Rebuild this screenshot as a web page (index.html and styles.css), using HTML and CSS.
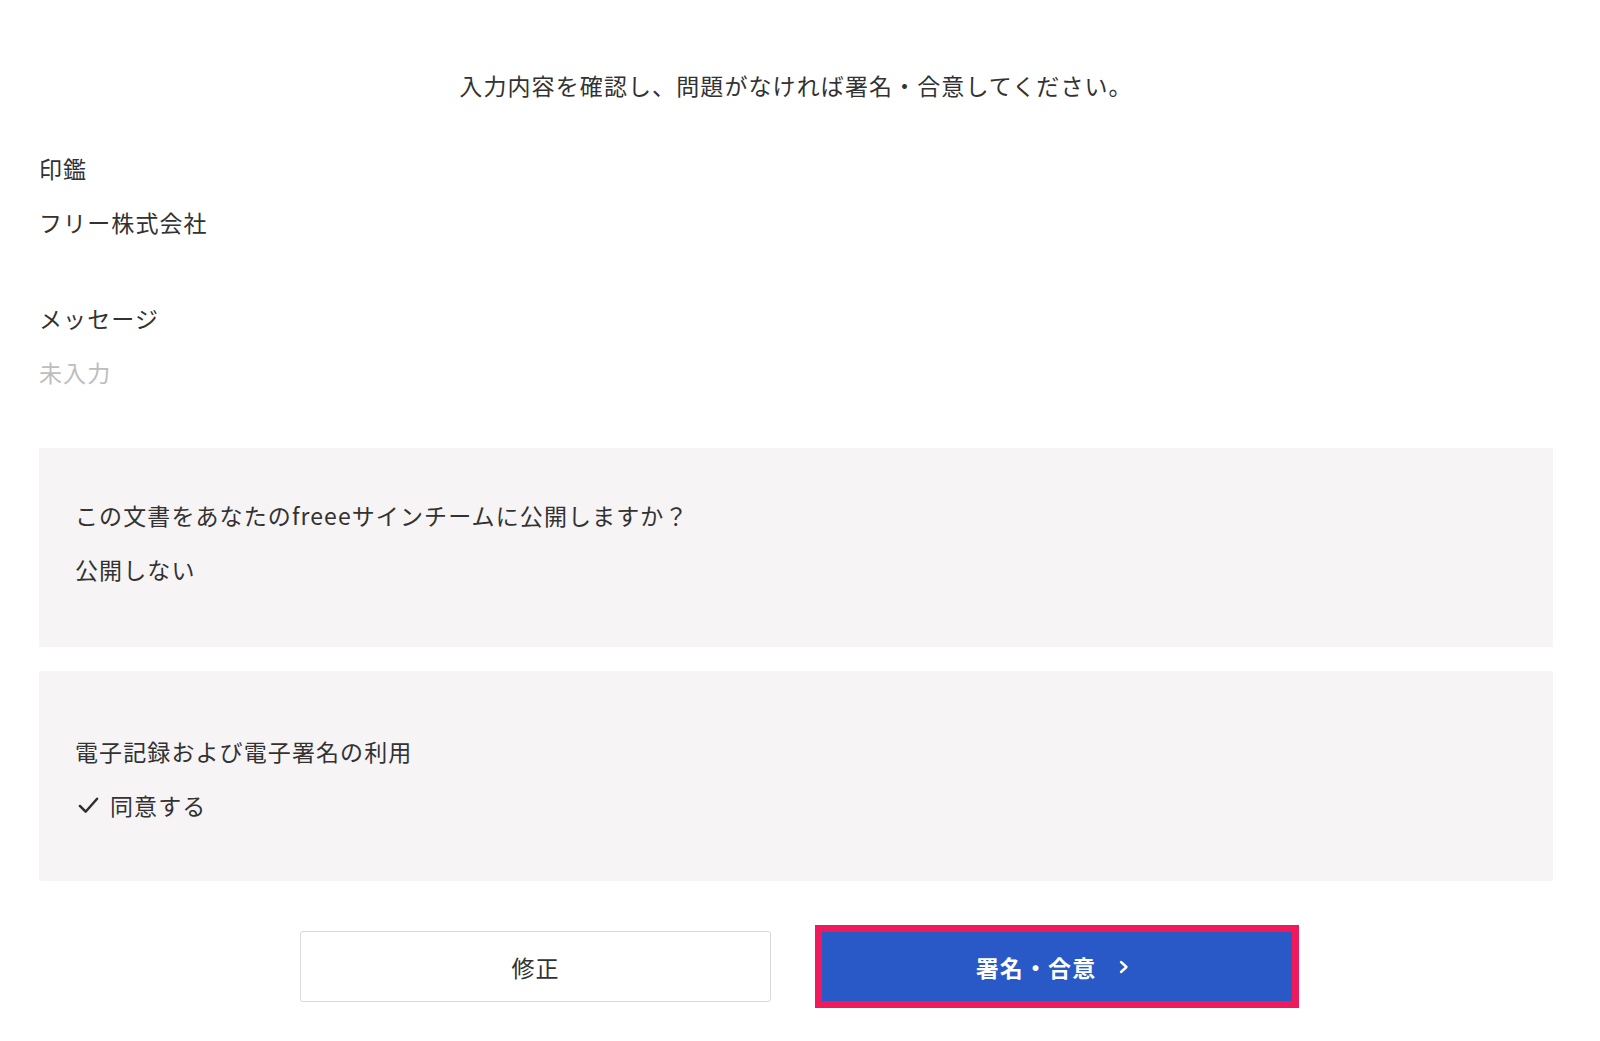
FILE: index.html
```html
<!DOCTYPE html>
<html lang="ja">
<head>
<meta charset="utf-8">
<title>署名・合意</title>
<link rel="stylesheet" href="styles.css">
</head>
<body>
<main class="page">
  <p class="lead">入力内容を確認し、問題がなければ署名・合意してください。</p>

  <section class="field">
    <div class="label">印鑑</div>
    <div class="value">フリー株式会社</div>
  </section>

  <section class="field field-message">
    <div class="label">メッセージ</div>
    <div class="value empty">未入力</div>
  </section>

  <section class="panel panel-publish">
    <div class="label">この文書をあなたのfreeeサインチームに公開しますか？</div>
    <div class="value">公開しない</div>
  </section>

  <section class="panel panel-consent">
    <div class="label">電子記録および電子署名の利用</div>
    <div class="value check">
      <svg class="check-icon" viewBox="0 0 24 24" width="25" height="23" aria-hidden="true">
        <path d="M3 12.5 L9 18.5 L21 5" fill="none" stroke="#2f2f2f" stroke-width="2.6" stroke-linecap="round" stroke-linejoin="round"/>
      </svg>
      <span>同意する</span>
    </div>
  </section>

  <div class="actions">
    <button class="btn btn-secondary" type="button">修正</button>
    <button class="btn btn-primary" type="button">
      <span>署名・合意</span>
      <svg class="chev" viewBox="0 0 12 16" width="12" height="16" aria-hidden="true">
        <path d="M3 3 L8.5 8 L3 13" fill="none" stroke="#fff" stroke-width="2.4" stroke-linecap="round" stroke-linejoin="round"/>
      </svg>
    </button>
  </div>
</main>
</body>
</html>
```

FILE: styles.css
```css
* { box-sizing: border-box; }

html, body {
  margin: 0;
  padding: 0;
  background: #ffffff;
}

body {
  font-family: "Noto Sans CJK JP", "Noto Sans", sans-serif;
  font-size: 23px;
  line-height: 32px;
  letter-spacing: 1.1px;
  color: #323232;
}

.page {
  width: 1514px;
  margin-left: 39px;
  padding-top: 69px;
  display: flex;
  flex-direction: column;
}

.lead {
  margin: 0 0 51px;
  text-align: center;
}

.field {
  display: flex;
  flex-direction: column;
  gap: 22px;
}

.field-message {
  margin-top: 64px;
}

.value.empty {
  color: #bdbdbd;
}

.panel {
  background: #f6f4f4;
  display: flex;
  flex-direction: column;
  gap: 22px;
  padding: 51px 36px 62px;
}

.panel-publish {
  margin-top: 60px;
}

.panel-consent {
  margin-top: 24px;
  padding-top: 64px;
  padding-bottom: 60px;
}

.check {
  display: flex;
  align-items: center;
  gap: 9px;
}

.check-icon {
  display: block;
  margin-left: 1px;
}

.actions {
  display: flex;
  justify-content: center;
  align-items: center;
  gap: 51px;
  margin-top: 50px;
  padding-bottom: 40px;
}

.btn {
  font-family: inherit;
  font-size: 23px;
  letter-spacing: 1.1px;
  height: 71px;
  width: 471px;
  border-radius: 3px;
  cursor: pointer;
  display: flex;
  align-items: center;
  justify-content: center;
}

.btn-secondary {
  background: #ffffff;
  border: 1px solid #d9d9d9;
  color: #323232;
}

.btn-primary {
  width: 470px;
  height: 69px;
  background: #2859c6;
  border: none;
  color: #ffffff;
  font-weight: 700;
  gap: 22px;
  outline: 7px solid #ef1a5c;
  outline-offset: 0;
  border-radius: 0;
  padding: 0 8px 0 0;
}

.chev {
  display: block;
}
```
